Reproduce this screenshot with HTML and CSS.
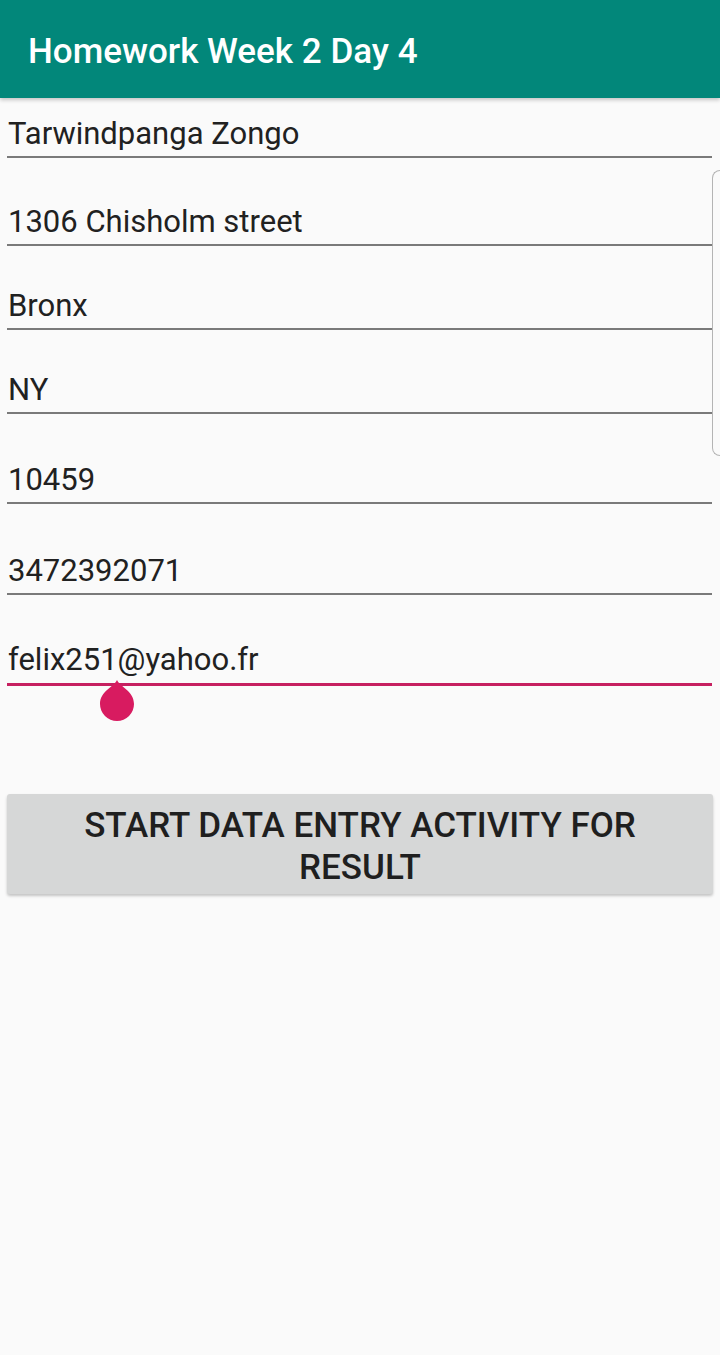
FILE: index.html
```html
<!DOCTYPE html>
<html>
<head>
<meta charset="utf-8">
<link rel="stylesheet" href="styles.css">
</head>
<body>
<header class="appbar"><h1 class="title">Homework Week 2 Day 4</h1></header>
<main class="form">
  <div class="field f1">Tarwindpanga Zongo</div>
  <div class="field f2">1306 Chisholm street</div>
  <div class="field f3">Bronx</div>
  <div class="field f3">NY</div>
  <div class="field f5">10459</div>
  <div class="field f6">3472392071</div>
  <div class="field f6 focused">felix251@yahoo.fr
    <svg class="handle" width="36" height="42" viewBox="0 0 36 42"><path d="M18 0 C21 7 35 11 35 24 A17 17 0 0 1 1 24 C1 11 15 7 18 0 Z" fill="#d81b60"/></svg>
  </div>
  <button class="btn">START DATA ENTRY ACTIVITY FOR RESULT</button>
</main>
<div class="edge"></div>
</body>
</html>
```
FILE: styles.css
```css
html, body { margin: 0; padding: 0; }
body {
  background: #fafafa;
  font-family: Roboto, "Liberation Sans", sans-serif;
  width: 720px;
  height: 1355px;
  overflow: hidden;
  position: relative;
}
.appbar {
  height: 98px;
  background: #02877a;
  display: flex;
  align-items: center;
  padding-left: 28px;
  box-shadow: 0 2px 4px rgba(0,0,0,0.22);
  position: relative;
  z-index: 1;
}
.title {
  margin: 0;
  color: #ffffff;
  font-size: 35px;
  font-weight: 500;
  line-height: 40px;
  padding-top: 6px;
}
.form {
  padding: 0 8px 0 7px;
}
.field {
  box-sizing: border-box;
  display: flex;
  align-items: flex-end;
  font-size: 31px;
  line-height: 36px;
  color: #212121;
  padding: 0 0 4px 1px;
  border-bottom: 2px solid #7a7a7a;
  position: relative;
}
.f1 { height: 60px; }
.f2 { height: 88px; }
.f3 { height: 84px; }
.f5 { height: 90px; }
.f6 { height: 91px; }
.focused {
  border-bottom: 3px solid #c62060;
  padding-bottom: 5px;
}
.handle {
  position: absolute;
  left: 92px;
  top: 85px;
}
.btn {
  display: block;
  box-sizing: border-box;
  width: 706px;
  height: 100px;
  margin: 108px 0 0 0;
  border: none;
  border-radius: 3px;
  background: #d6d7d7;
  box-shadow: 0 2px 3px rgba(0,0,0,0.22);
  font-family: Roboto, "Liberation Sans", sans-serif;
  font-size: 35px;
  font-weight: 500;
  line-height: 42px;
  color: #1f1f1f;
  padding: 11px 60px 5px;
  text-align: center;
}
.edge {
  position: absolute;
  right: 0;
  top: 170px;
  width: 7px;
  height: 284px;
  border: 1.5px solid #b4b4b4;
  border-right: none;
  border-radius: 10px 0 0 10px;
}
```
